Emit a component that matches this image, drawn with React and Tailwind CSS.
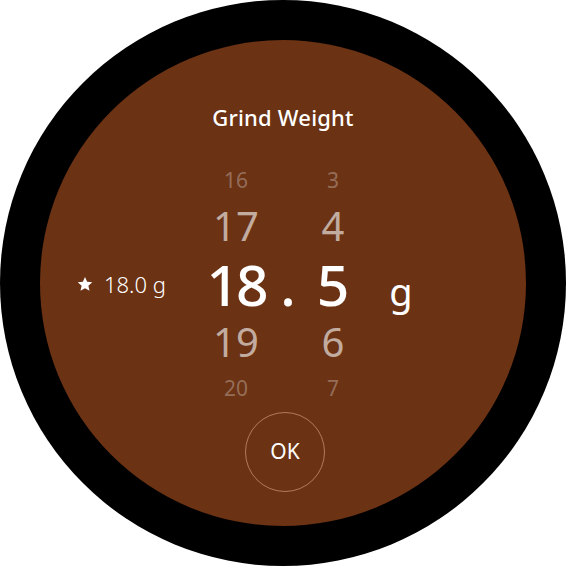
import React from "react";

const font = { fontFamily: '"Noto Sans", "Open Sans", sans-serif' };

export default function App() {
  return (
    <div className="w-[566px] h-[567px] bg-white" style={font}>
      <div className="w-[566px] h-[566px] rounded-full bg-black flex items-center justify-center">
        <div className="w-[486px] h-[486px] rounded-full bg-[#6b3214] flex flex-col items-center text-white">
          <div className="mt-[62px] h-[30px] leading-[30px] text-[22px] font-medium tracking-[0.2px]">
            Grind Weight
          </div>
          <div className="mt-[28px] w-full flex items-center">
            <div className="w-[37px]" />
            <div className="w-[129px] flex items-center gap-[11px] text-[22px] font-light">
              <svg width="16" height="16" viewBox="0 0 24 24" fill="white">
                <path d="M12 1.5l3.2 7.1 7.7.8-5.8 5.2 1.7 7.6L12 18.3l-6.8 3.9 1.7-7.6L1.1 9.4l7.7-.8z" />
              </svg>
              <span className="leading-none">18.0 g</span>
            </div>
            <div className="grid grid-cols-[60px_36px_62px_16px_42px] grid-rows-[40px_52px_64px_52px_40px]">
              <div className="flex items-center justify-center text-[21px] leading-none text-white/30">16</div>
              <div />
              <div className="flex items-center justify-center text-[21px] leading-none text-white/30">3</div>
              <div />
              <div />

              <div className="flex items-center justify-center text-[40px] leading-none text-white/60">17</div>
              <div />
              <div className="flex items-center justify-center text-[40px] leading-none text-white/60">4</div>
              <div />
              <div />

              <div className="self-baseline text-center text-[57px] leading-[64px] font-medium tracking-[-3px]">18</div>
              <div className="self-baseline text-center pl-[8px] text-[57px] leading-[64px] font-medium">.</div>
              <div className="self-baseline text-center text-[57px] leading-[64px] font-medium">5</div>
              <div />
              <div className="self-baseline text-center text-[38px] leading-[64px]">g</div>

              <div className="flex items-center justify-center text-[40px] leading-none text-white/60">19</div>
              <div />
              <div className="flex items-center justify-center text-[40px] leading-none text-white/60">6</div>
              <div />
              <div />

              <div className="flex items-center justify-center text-[21px] leading-none text-white/30">20</div>
              <div />
              <div className="flex items-center justify-center text-[21px] leading-none text-white/30">7</div>
              <div />
              <div />
            </div>
          </div>
          <div className="mt-[4px] ml-[4px] w-[80px] h-[80px] rounded-full border border-[#b57a5c] flex items-center justify-center text-[21px]">
            OK
          </div>
        </div>
      </div>
    </div>
  );
}
